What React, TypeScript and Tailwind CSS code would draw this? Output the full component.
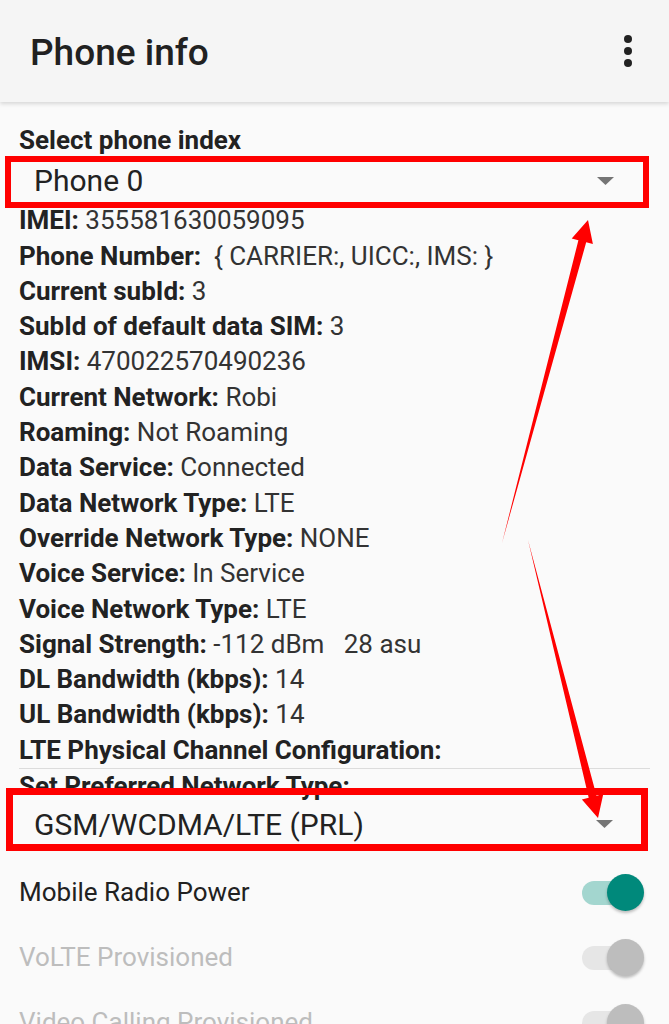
const rows: [string, string][] = [
  ["IMEI:", " 355581630059095"],
  ["Phone Number:", "  { CARRIER:, UICC:, IMS: }"],
  ["Current subId:", " 3"],
  ["SubId of default data SIM:", " 3"],
  ["IMSI:", " 470022570490236"],
  ["Current Network:", " Robi"],
  ["Roaming:", " Not Roaming"],
  ["Data Service:", " Connected"],
  ["Data Network Type:", " LTE"],
  ["Override Network Type:", " NONE"],
  ["Voice Service:", " In Service"],
  ["Voice Network Type:", " LTE"],
  ["Signal Strength:", " -112 dBm   28 asu"],
  ["DL Bandwidth (kbps):", " 14"],
  ["UL Bandwidth (kbps):", " 14"],
  ["LTE Physical Channel Configuration:", ""],
];

const Caret = () => (
  <svg width="17" height="8" viewBox="0 0 17 8">
    <polygon points="0,0 17,0 8.5,8" fill="#757575" />
  </svg>
);

const Switch = ({ on, disabled }: { on: boolean; disabled?: boolean }) => (
  <div className="relative w-[62px] h-[40px] flex items-center">
    <div
      className={`w-[48px] h-[24px] rounded-full ${
        disabled ? "bg-[#e6e6e6]" : on ? "bg-[#a3d6cf]" : "bg-[#bdbdbd]"
      }`}
    />
    <div
      className={`absolute right-0 top-[1px] w-[37px] h-[37px] rounded-full shadow-[0_2px_3px_rgba(0,0,0,0.25)] ${
        disabled ? "bg-[#bdbdbd]" : "bg-[#00897b]"
      }`}
    />
  </div>
);

const toggles = [
  { label: "Mobile Radio Power", on: true, disabled: false },
  { label: "VoLTE Provisioned", on: true, disabled: true },
  { label: "Video Calling Provisioned", on: true, disabled: true },
];

export default function App() {
  return (
    <div
      className="relative w-[669px] h-[1024px] overflow-hidden bg-[#fafafa] text-[#222]"
      style={{ fontFamily: "Roboto, 'Liberation Sans', sans-serif" }}
    >
      {/* Toolbar */}
      <div className="relative z-10 h-[102px] bg-[#f5f5f5] flex items-center justify-between pl-[30px] pr-[37px] pt-[4px] shadow-[0_2px_4px_rgba(0,0,0,0.14)]">
        <h1 className="text-[37px] font-medium text-[#212121]">Phone info</h1>
        <div className="flex flex-col gap-[4px] -mt-[4px]">
          <span className="w-[8px] h-[8px] rounded-full bg-[#222]" />
          <span className="w-[8px] h-[8px] rounded-full bg-[#222]" />
          <span className="w-[8px] h-[8px] rounded-full bg-[#222]" />
        </div>
      </div>

      <div className="pt-[21px]">
        <p className="px-[19px] text-[26px] leading-[35.3px] font-bold">
          Select phone index
        </p>

        {/* phone index spinner */}
        <div className="relative z-[1] -mt-[2px] ml-[5px] mr-[20px] h-[52px] border-[6px] border-[#ff0000] flex items-center justify-between pl-[23px] pr-[29px] pb-[3px]">
          <span className="text-[30px] text-[#222]">Phone 0</span>
          <Caret />
        </div>

        <div className="-mt-[5px] px-[19px] text-[26px] leading-[35.3px]">
          {rows.map(([label, value]) => (
            <p key={label} className="whitespace-pre">
              <span className="font-bold">{label}</span>
              <span className="text-[#333]">{value}</span>
            </p>
          ))}
        </div>

        <div className="mx-[19px] h-px bg-[#dcdcdc]" />

        <p className="px-[19px] text-[26px] leading-[35.3px] font-bold">
          Set Preferred Network Type:
        </p>

        {/* preferred network spinner */}
        <div className="relative z-[1] -mt-[16px] ml-[6px] mr-[21px] h-[63px] border-[7px] border-[#ff0000] flex items-center justify-between pl-[21px] pr-[28px] pt-[9px]">
          <span className="text-[30px] text-[#222]">GSM/WCDMA/LTE (PRL)</span>
          <Caret />
        </div>

        <div className="mt-[9px]">
          {toggles.map((t) => (
            <div
              key={t.label}
              className="h-[65px] flex items-center justify-between pl-[19px] pr-[25px]"
            >
              <span
                className={`text-[26px] ${
                  t.disabled ? "text-[#bdbdbd]" : "text-[#212121]"
                }`}
              >
                {t.label}
              </span>
              <Switch on={t.on} disabled={t.disabled} />
            </div>
          ))}
        </div>
      </div>

      {/* annotation arrows */}
      <svg
        className="absolute inset-0 z-20 pointer-events-none"
        width="669"
        height="1024"
        viewBox="0 0 669 1024"
      >
        <polygon
          points="502,543 586.2,242.3 592.9,244.1 588,220 571.7,238.5 578.4,240.3"
          fill="#ff0000"
        />
        <polygon
          points="528,540 596.5,795.7 603.3,794 598,818 581.9,799.4 588.7,797.7"
          fill="#ff0000"
        />
      </svg>
    </div>
  );
}
